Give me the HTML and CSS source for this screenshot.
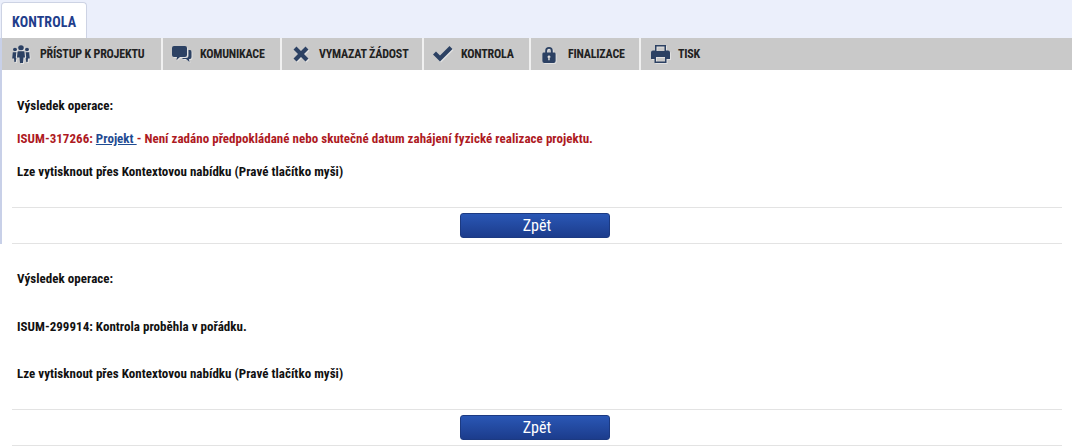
FILE: index.html
```html
<!DOCTYPE html>
<html lang="cs">
<head>
  <meta charset="UTF-8" />
  <title>Kontrola</title>
  <link rel="stylesheet" href="styles.css">
</head>
<body>
  <div class="tabs">
    <div class="tab">KONTROLA</div>
  </div>

  <div class="panel">
    <div class="toolbar">
      <a class="tool tool-pristup">
        <svg class="ico" width="18" height="18" viewBox="0 0 18 20" preserveAspectRatio="none"><g fill="#2c4163"><circle cx="9" cy="3" r="2.800"/><circle cx="3" cy="5" r="2"/><circle cx="15" cy="5" r="2"/><path d="M6.500 7h5q1 0 1 1l.5 6h-1.500l-.5 6h-3l-.5-6H5l.5-6q0-1 1-1z"/><path d="M.8 8h3.500L3.800 14l.5 1-.6 4H2.400L2 15H.2z"/><path d="M13.700 8h3.500l.6 7H16l-.4 4h-1.300l-.6-4 .5-1z"/></g></svg>
        PŘÍSTUP K PROJEKTU
      </a>
      <a class="tool tool-komunikace">
        <svg class="ico" width="20" height="16" viewBox="0 1 20 16"><path fill="#2c4163" d="M2 1h11q2 0 2 2v7q0 2-2 2H8l-3.500 3 .5-3H2q-2 0-2-2V3q0-2 2-2z"/><path fill="#2c4163" d="M16.500 5H18q1.500 0 1.500 2v5q0 2-1.500 2h-1l.5 3-3.500-3H10l1-1h3q2.500 0 2.500-2.500z"/></svg>
        KOMUNIKACE
      </a>
      <a class="tool tool-vymazat">
        <svg class="ico" width="16" height="16" viewBox="0 0 16 16"><path fill="#2c4163" d="M3.500 0.500 8 5l4.500-4.500 3 3L11 8l4.500 4.500-3 3L8 11l-4.500 4.500-3-3L5 8 .5 3.500z"/></svg>
        VYMAZAT ŽÁDOST
      </a>
      <a class="tool tool-kontrola">
        <svg class="ico" width="20" height="16" viewBox="0 0 20 16"><path fill="#2c4163" d="M0 8.500 3 5.500l4 4L16.500 0 19.500 3 7 15.500z"/></svg>
        KONTROLA
      </a>
      <a class="tool tool-finalizace">
        <svg class="ico" width="14" height="17" viewBox="0 0 14 18"><path fill="#2c4163" fill-rule="evenodd" d="M3 7V5a4 4 0 0 1 8 0v2h1.500q1.500 0 1.500 1.500V16q0 2-2 2H2q-2 0-2-2V8.500Q0 7 1.500 7zM5 7h4V5a2 2 0 0 0-4 0zM7 10a1.500 1.500 0 0 0-.8 2.800V15h1.600v-2.200A1.500 1.500 0 0 0 7 10z"/></svg>
        FINALIZACE
      </a>
      <a class="tool tool-tisk">
        <svg class="ico" width="19" height="18" viewBox="0 0 19 18"><path fill="#2c4163" fill-rule="evenodd" d="M4 0h11v5.500h2q2 0 2 2V14h-3.500v4h-12v-4H0V7.500q0-2 2-2h2zM5.500 1.500v4.500h8V1.500zM5 12v4.500h9V12z"/></svg>
        TISK
      </a>
    </div>

    <div class="result result-first">
      <p class="row">Výsledek operace:</p>
      <p class="row err">ISUM-317266: <a class="odkaz" href="#">Projekt </a> - Není zadáno předpokládané nebo skutečné datum zahájení fyzické realizace projektu.</p>
      <p class="row">Lze vytisknout přes Kontextovou nabídku (Pravé tlačítko myši)</p>
      <div class="actions">
        <button class="btn">Zpět</button>
      </div>
    </div>
  </div>

  <div class="result result-second">
    <p class="row">Výsledek operace:</p>
    <p class="row">ISUM-299914: Kontrola proběhla v pořádku.</p>
    <p class="row">Lze vytisknout přes Kontextovou nabídku (Pravé tlačítko myši)</p>
    <div class="actions">
      <button class="btn">Zpět</button>
    </div>
  </div>
</body>
</html>
```

FILE: styles.css
```css
* {
  box-sizing: border-box;
}

html, body {
  margin: 0;
  padding: 0;
  background: #fff;
  color: #111;
  font-family: "Roboto", "Liberation Sans", sans-serif;
  font-stretch: 75%;
  overflow: hidden;
}

.tabs {
  height: 38px;
  background: #ebeffb;
  padding: 2px 0 0 1px;
}

.tab {
  width: 86px;
  height: 36px;
  padding-top: 10px;
  padding-left: 10px;
  background: #fff;
  border: 1px solid #cdd3e4;
  border-bottom: none;
  border-radius: 4px 4px 0 0;
  color: #1f3e8c;
  font-size: 14px;
  font-weight: 700;
  letter-spacing: 0.1px;
  line-height: 18px;
}

.panel {
  border-left: 2px solid #c8d0e8;
}

.toolbar {
  display: flex;
  height: 32px;
  background: #c9c9c9;
}

.tool {
  display: flex;
  align-items: center;
  border-right: 2px solid #f0f0f0;
  color: #222;
  font-size: 12px;
  font-weight: 700;
  letter-spacing: -0.2px;
  white-space: nowrap;
}

.tool-pristup { width: 161px; padding-left: 10px; }
.tool-komunikace { width: 119px; padding-left: 9px; }
.tool-vymazat { width: 142px; padding-left: 11px; }
.tool-kontrola { width: 107px; padding-left: 9px; }
.tool-finalizace { width: 110px; padding-left: 11px; }
.tool-tisk { border-right: none; padding-left: 10px; }

.ico {
  flex: none;
  margin-right: 8px;
  filter: drop-shadow(1px 1px 0 rgba(255, 255, 255, 0.45));
}

.tool-pristup .ico { margin-right: 10px; }
.tool-komunikace .ico { margin-right: 8px; }
.tool-vymazat .ico { margin-right: 10px; }
.tool-kontrola .ico { margin-right: 8px; }
.tool-finalizace .ico { margin-right: 12px; }

.result {
  padding: 0 10px 0 10px;
}

.result-second {
  padding-left: 12px;
}

.row {
  margin: 0;
  padding-left: 5px;
  font-size: 13px;
  font-weight: 700;
  letter-spacing: 0.03px;
  line-height: 16px;
}

.err {
  color: #ae1a1f;
}

.odkaz {
  color: #1f4b92;
  text-decoration: underline;
}

.actions {
  display: flex;
  justify-content: center;
  border-top: 1px solid #e3e3e3;
  border-bottom: 1px solid #e3e3e3;
  padding: 5px 4px 5px 0;
}

.btn {
  width: 150px;
  height: 25px;
  padding: 0 0 0 4px;
  border: 1px solid #1c3a82;
  border-radius: 3px;
  background: linear-gradient(#2a57b5, #1c3c8c);
  color: #fff;
  font-family: inherit;
  font-stretch: 75%;
  font-size: 16px;
  line-height: 20px;
}

.result-first { padding-top: 28px; }
.result-first .row { margin-bottom: 17px; }
.result-first .row:nth-child(3) { margin-bottom: 27px; }

.result-second { padding-top: 27px; }
.result-second .row { margin-bottom: 32px; }
.result-second .row:nth-child(2) { margin-bottom: 31px; }
.result-second .row:nth-child(3) { margin-bottom: 27px; }
```
